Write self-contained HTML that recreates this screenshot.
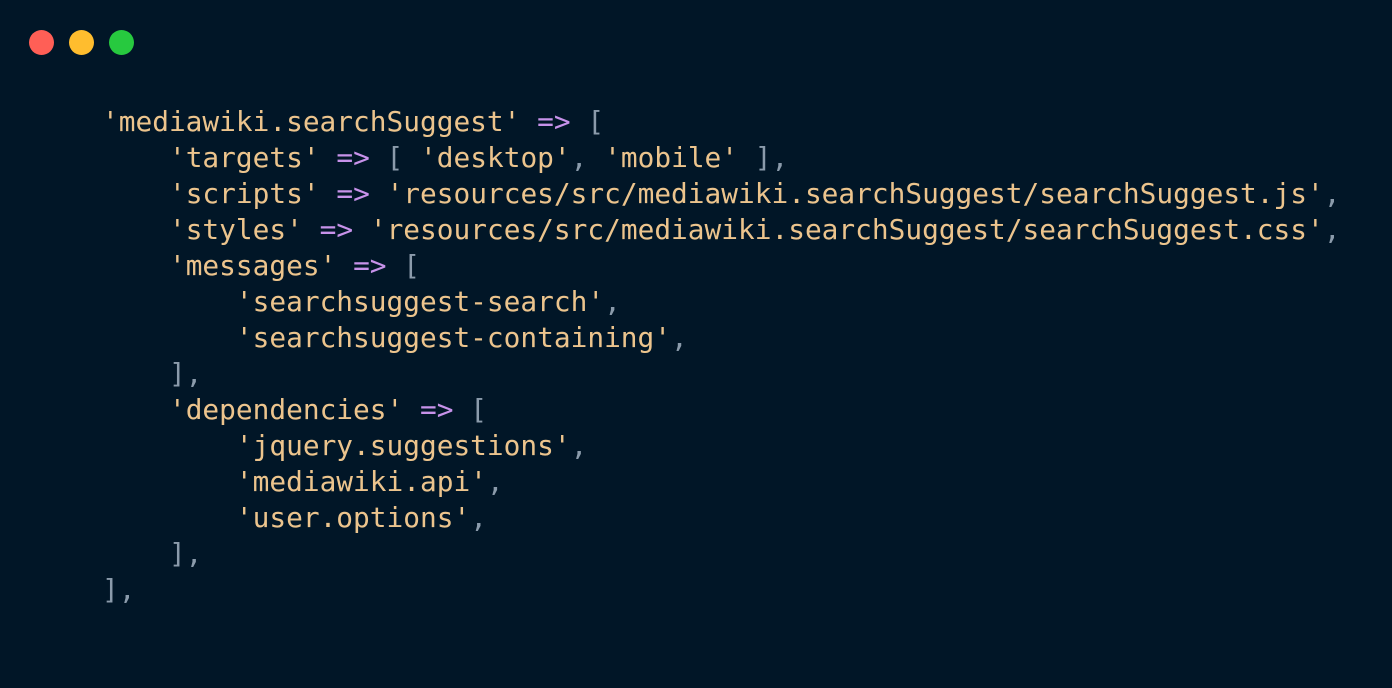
<!DOCTYPE html>
<html><head><style>
html,body{margin:0;padding:0;background:#011627;}
body{width:1392px;height:688px;position:relative;overflow:hidden;}
.d{position:absolute;top:30px;width:25px;height:25px;border-radius:50%;}
pre{position:absolute;left:102px;top:104px;margin:0;font-family:"DejaVu Sans Mono","Liberation Mono",monospace;font-size:27.8px;line-height:36px;color:#8b9bab;}
.s{color:#ecc48d}.o{color:#c792ea}
</style></head><body>
<div class="d" style="left:29px;background:#ff5f56"></div>
<div class="d" style="left:69px;background:#ffbd2e"></div>
<div class="d" style="left:109px;background:#27c93f"></div>
<pre><span class="s">'mediawiki.searchSuggest'</span> <span class="o">=&gt;</span> [
    <span class="s">'targets'</span> <span class="o">=&gt;</span> [ <span class="s">'desktop'</span>, <span class="s">'mobile'</span> ],
    <span class="s">'scripts'</span> <span class="o">=&gt;</span> <span class="s">'resources/src/mediawiki.searchSuggest/searchSuggest.js'</span>,
    <span class="s">'styles'</span> <span class="o">=&gt;</span> <span class="s">'resources/src/mediawiki.searchSuggest/searchSuggest.css'</span>,
    <span class="s">'messages'</span> <span class="o">=&gt;</span> [
        <span class="s">'searchsuggest-search'</span>,
        <span class="s">'searchsuggest-containing'</span>,
    ],
    <span class="s">'dependencies'</span> <span class="o">=&gt;</span> [
        <span class="s">'jquery.suggestions'</span>,
        <span class="s">'mediawiki.api'</span>,
        <span class="s">'user.options'</span>,
    ],
],</pre>
</body></html>
